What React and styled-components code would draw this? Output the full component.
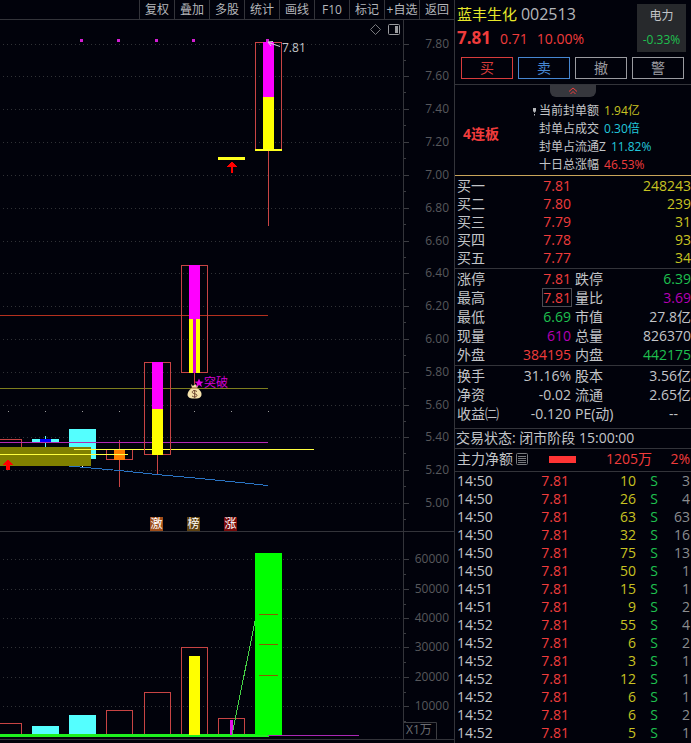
import React from 'react';
import styled, { createGlobalStyle } from 'styled-components';

const colors = {
  bg: '#01020b',
  line: '#33343a',
  text: '#c3c5c8',
  muted: '#8b8d90',
  red: '#f03c3c',
  green: '#1fc04f',
  yellow: '#c8c322',
  cyan: '#22c8dc',
  purple: '#b400b4',
  candle: '#c84444',
};

const GlobalStyle = createGlobalStyle`
  * {
    box-sizing: border-box;
  }

  body {
    margin: 0;
    background: ${colors.bg};
    color: ${colors.text};
    font-family: 'Open Sans', 'Noto Sans CJK SC', sans-serif;
    font-size: 14px;
  }

  button {
    font-family: inherit;
    cursor: pointer;
  }
`;

const Page = styled.div`
  display: flex;
  align-items: stretch;
  min-height: 100vh;
`;

const ChartColumn = styled.main`
  flex: 1;
  min-width: 0;
`;

const Toolbar = styled.nav`
  display: flex;
  justify-content: flex-end;
  height: 20px;
  border-bottom: 1px solid ${colors.line};
`;

const ToolButton = styled.button`
  width: 35px;
  padding: 0;
  border: 0;
  border-left: 1px solid ${colors.line};
  background: none;
  color: #b4b6ba;
  font-size: 12px;
  line-height: 17px;
  white-space: nowrap;
`;

const Pane = styled.section`
  display: flex;
  height: ${(props) => props.$height}px;
  border-bottom: 1px solid ${colors.line};
`;

const Plot = styled.svg`
  flex: 1;
  min-width: 0;
  height: 100%;
  font-size: 12px;
`;

const AxisColumn = styled.svg`
  width: 51px;
  height: 100%;
  border-left: 1px solid ${colors.line};
  font-size: 12px;
`;

const Side = styled.aside`
  width: 237px;
  border-left: 1px solid ${colors.line};
`;

const Header = styled.header`
  display: flex;
  justify-content: space-between;
  padding: 4px 5px 0 2px;
`;

const Name = styled.h1`
  margin: 0 0 4px;
  color: #e8e82a;
  font-size: 15px;
  font-weight: 400;
  line-height: 20px;
`;

const Code = styled.span`
  color: #b4b6ba;
  font-size: 16px;
`;

const PriceRow = styled.div`
  display: flex;
  gap: 9px;
  align-items: baseline;
  color: ${colors.red};
  line-height: 20px;
`;

const LastPrice = styled.strong`
  font-size: 17px;
`;

const Sector = styled.div`
  width: 49px;
  height: 48px;
  background: #27292c;
  font-size: 12px;
  line-height: 24px;
  text-align: center;
`;

const SectorChange = styled.div`
  color: ${colors.green};
`;

const Actions = styled.div`
  display: flex;
  gap: 5px;
  padding: 5px 7px 5px 6px;
  border-bottom: 1px solid ${colors.line};
`;

const ActionButton = styled.button`
  flex: 1;
  height: 22px;
  padding: 0;
  border: 1px solid ${(props) => props.$color};
  background: none;
  color: ${(props) => props.$color};
  font-size: 14px;
  line-height: 18px;
`;

const Collapse = styled.button`
  display: flex;
  justify-content: center;
  align-items: center;
  width: 46px;
  height: 12px;
  margin: 0 auto;
  padding: 0;
  border: 0;
  border-radius: 0 0 6px 6px;
  background: #36373d;
`;

const Seal = styled.section`
  display: flex;
  align-items: center;
  padding: 5px 0 1px 8px;
  border-bottom: 1px solid #c8a45a;
`;

const Streak = styled.strong`
  width: 69px;
  padding-bottom: 10px;
  color: ${colors.red};
`;

const SealList = styled.dl`
  margin: 0;
  font-size: 12px;
  line-height: 18px;
`;

const SealRow = styled.div`
  display: flex;
  gap: 5px;

  dt {
    display: flex;
    align-items: center;
  }

  dd {
    margin: 0;
    color: ${(props) => props.$color};
  }
`;

const IconSlot = styled.span`
  display: flex;
  width: 7px;
`;

const Block = styled.section`
  padding: ${(props) => props.$pad || '0'};
  border-bottom: 1px solid ${colors.line};
`;

const DataTable = styled.table`
  width: 100%;
  border-collapse: collapse;
  table-layout: fixed;
  line-height: ${(props) => props.$row}px;
  white-space: nowrap;

  th,
  td {
    height: ${(props) => props.$row}px;
    padding: 0;
    font-weight: 400;
    text-align: left;
  }

  th {
    padding-left: 2px;
  }
`;

const Num = styled.td`
  && {
    color: ${(props) => props.$color || colors.text};
    text-align: right;
    padding-right: ${(props) => props.$end || 0}px;
  }
`;

const Boxed = styled.span`
  display: inline-block;
  outline: 1px solid #4a4b52;
  line-height: 17px;
`;

const QuoteLabel = styled.span`
  padding-left: 2px;
`;

const Status = styled.p`
  margin: 0;
  padding-left: 1px;
  line-height: 18px;
  padding-bottom: 1px;
`;

const MainFlow = styled.div`
  display: flex;
  align-items: center;
  height: 22px;
  padding: 0 1px 2px 2px;
  line-height: 20px;
  color: ${colors.red};
`;

const FlowLabel = styled.span`
  display: flex;
  flex: none;
  align-items: center;
  gap: 3px;
  width: 92px;
  color: ${colors.text};
`;

const FlowBar = styled.span`
  width: 27px;
  height: 7px;
  background: #ff3434;
`;

const FlowValue = styled.span`
  flex: ${(props) => (props.$wide ? '1' : 'none')};
  width: 38px;
  text-align: right;
`;

const tools = ['复权', '叠加', '多股', '统计', '画线', 'F10', '标记', '+自选', '返回'];

const priceGrid = [44, 76, 109, 142, 175, 208, 241, 273, 306, 339, 372, 405, 437, 470, 503];
const priceLabels = priceGrid.map((y, i) => ({ y, label: (7.8 - i * 0.2).toFixed(2) }));
const volumeGrid = [559, 589, 618, 647, 677, 706];
const volumeLabels = volumeGrid.map((y, i) => ({ y, label: String(60000 - i * 10000) }));

const signalDots = [80, 117, 155, 192, 266];
const dayDots = [8, 45, 82, 119, 157, 194, 231, 268];

const badges = [
  { x: 150, label: '激', fill: '#a04e1a' },
  { x: 187, label: '榜', fill: '#5e4210' },
  { x: 224, label: '涨', fill: '#780a0a' },
];

const sealRows = [
  { label: '当前封单额', value: '1.94亿', color: colors.yellow, mark: true },
  { label: '封单占成交', value: '0.30倍', color: colors.cyan },
  { label: '封单占流通Z', value: '11.82%', color: colors.cyan },
  { label: '十日总涨幅', value: '46.53%', color: colors.red },
];

const bids = [
  ['买一', '7.81', '248243'],
  ['买二', '7.80', '239'],
  ['买三', '7.79', '31'],
  ['买四', '7.78', '93'],
  ['买五', '7.77', '34'],
];

const quotes = [
  { a: '涨停', av: '7.81', ac: colors.red, b: '跌停', bv: '6.39', bc: colors.green },
  { a: '最高', av: '7.81', ac: colors.red, boxed: true, b: '量比', bv: '3.69', bc: colors.purple },
  { a: '最低', av: '6.69', ac: colors.green, b: '市值', bv: '27.8亿' },
  { a: '现量', av: '610', ac: colors.purple, b: '总量', bv: '826370' },
  { a: '外盘', av: '384195', ac: colors.red, b: '内盘', bv: '442175', bc: colors.green },
];

const finance = [
  { a: '换手', av: '31.16%', b: '股本', bv: '3.56亿' },
  { a: '净资', av: '-0.02', b: '流通', bv: '2.65亿' },
  { a: '收益㈡', av: '-0.120', b: 'PE(动)', bv: '--', end: 13 },
];

const ticks = [
  ['14:50', 10, 3],
  ['14:50', 26, 4],
  ['14:50', 63, 63],
  ['14:50', 32, 16],
  ['14:50', 75, 13],
  ['14:50', 50, 1],
  ['14:51', 15, 1],
  ['14:51', 9, 2],
  ['14:52', 55, 4],
  ['14:52', 6, 2],
  ['14:52', 3, 1],
  ['14:52', 12, 1],
  ['14:52', 6, 1],
  ['14:52', 6, 2],
  ['14:52', 5, 1],
];

function GridLines({ rows }) {
  return rows.map((y) => (
    <line key={y} x1="3" x2="100%" y1={y + 0.5} y2={y + 0.5} stroke="#303236" strokeDasharray="1 3" />
  ));
}

// hollow body, x and y are the top left pixel of the outline
function Hollow({ x, y, height, width = 27 }) {
  return (
    <rect x={x + 0.5} y={y + 0.5} width={width - 1} height={height - 1} fill="none" stroke={colors.candle} />
  );
}

function Wick({ x, from, to, color = colors.candle }) {
  return <rect x={x} y={from} width="1" height={to - from} fill={color} />;
}

function Axis({ top, labels, minor, children }) {
  return (
    <AxisColumn>
      <g transform={`translate(0 ${-top})`}>
        {labels.map(({ y, label }) => (
          <g key={label}>
            <rect x="0" y={y} width="5" height="1" fill="#3c3d42" />
            <rect x="0" y={y + minor} width="2" height="1" fill="#3c3d42" />
            <text x="45" y={y + 4} textAnchor="end" fill="#57585c">{label}</text>
          </g>
        ))}
        {children}
      </g>
    </AxisColumn>
  );
}

function MoneyBag() {
  return (
    <g>
      <path d="M191 384 L193 386 L195 384 L197 386 L199 384 L197 388 L192 388 Z" fill="#f0dca0" />
      <path
        d="M192 388 H197 C200 390 202 392 201.500 395 C201 398 198 398.500 194.500 398.500 C191 398.500 188 398 187.500 395 C187.500 392 189 390 192 388 Z"
        fill="#f5e2ac"
      />
      <path d="M191.500 388 H198" stroke="#8c5a28" />
      <path d="M197 391.500 C194 389.500 191.500 391 192.500 392.800 C193.500 394.200 197 393.500 197 395.300 C197 397 194 397.500 192 396 M194.700 390 V398" fill="none" stroke="#6e4630" />
    </g>
  );
}

function PriceChart() {
  return (
    <Pane $height={512}>
      <Plot role="img" aria-label="日K线">
        <g transform="translate(0 -20)" shapeRendering="crispEdges">
          <GridLines rows={priceGrid} />

          <rect x="0" y="315" width="268" height="1" fill="#b4301e" />
          <rect x="0" y="388" width="268" height="1" fill="#7d7d1e" />
          {dayDots.map((x) => (
            <rect key={x} x={x} y="411" width="1" height="1" fill="#9a9a9a" />
          ))}
          {signalDots.map((x) => (
            <rect key={x} x={x} y="39" width="3" height="3" fill="#d21ed2" />
          ))}

          <Hollow x={-5} y={439} height={20} />
          <rect x="32" y="439" width="27" height="3" fill="#54ffff" />
          <Wick x={45} from={436} to={447} color="#54ffff" />
          <rect x="40" y="439" width="11" height="4" fill="#0000ff" />
          <rect x="69" y="429" width="27" height="30" fill="#54ffff" />
          <Wick x={119} from={440} to={487} />
          <Hollow x={106} y={449} height={11} />
          <rect x="114" y="450" width="11" height="10" fill="#ff8000" />

          <polyline
            points="69,466 80,467 119,470.500 157,474.500 200,478.500 240,482.500 268,485.500"
            fill="none"
            stroke="#2a74c4"
          />
          <rect x="0" y="447" width="91" height="19" fill="#808000" />
          <rect x="82" y="466" width="1" height="1" fill="#ffffff" />
          <rect x="0" y="442" width="268" height="1" fill="#b428b4" />
          <rect x="74" y="449" width="240" height="1" fill="#ffff40" />
          <rect x="0" y="454" width="128" height="1" fill="#ffff40" />
          <path d="M8 459 L13.500 465 H10 V470 H6 V465 H2.500 Z" fill="#ff0000" />

          <Hollow x={144} y={362} height={93} />
          <rect x="152" y="362" width="11" height="47" fill="#ff00ff" />
          <rect x="152" y="409" width="11" height="46" fill="#ffff00" />
          <Wick x={157} from={455} to={474} />

          <Hollow x={181} y={265} height={108} />
          <rect x="189" y="265" width="11" height="54" fill="#ff00ff" />
          <rect x="189" y="319" width="11" height="54" fill="#ffff00" />
          <rect x="193" y="319" width="3" height="54" fill="#d800d8" />
          <Wick x={194} from={373} to={384} />

          <rect x="218" y="157" width="27" height="3" fill="#ffff1e" />
          <path d="M232 161 L237 167 H233 V173 H231 V167 H227 Z" fill="#ff0000" />

          <Hollow x={255} y={42} height={109} />
          <rect x="263" y="42" width="11" height="55" fill="#ff00ff" />
          <rect x="263" y="97" width="11" height="53" fill="#ffff00" />
          <rect x="255" y="149" width="27" height="2" fill="#ffff1e" />
          <Wick x={268} from={151} to={226} />
        </g>

        <g transform="translate(0 -20)">
          <path d="M280 46.500 L268.500 42.500 M273 41.500 L268 42 L271 46" fill="none" stroke="#d8d8d8" />
          <text x="282" y="52" fill="#c3c5c8">7.81</text>
          <MoneyBag />
          <path
            d="M199 378.500 L200.300 381.500 L203.500 381.700 L201 383.700 L202 387 L199 385 L196 387 L197 383.700 L194.500 381.700 L197.700 381.500 Z"
            fill="#e000e0"
          />
          <text x="204" y="387" fill="#d200d2">突破</text>
          {badges.map(({ x, label, fill }) => (
            <g key={label}>
              <rect x={x} y="517" width="13" height="14" fill={fill} />
              <text x={x + 6.5} y="528" textAnchor="middle" fill="#ffffff">{label}</text>
            </g>
          ))}
          <path d="M375.500 24.500 L380.500 29.500 L375.500 34.500 L370.500 29.500 Z" fill="none" stroke="#77787c" />
          <rect x="388.500" y="24.500" width="11" height="10" rx="1" fill="none" stroke="#9a9b9f" />
          <rect x="395" y="26" width="3" height="7" fill="#9a9b9f" />
        </g>
      </Plot>
      <Axis top={20} labels={priceLabels} minor={16} />
    </Pane>
  );
}

function VolumeChart() {
  return (
    <Pane $height={208}>
      <Plot role="img" aria-label="成交量">
        <g transform="translate(0 -532)" shapeRendering="crispEdges">
          <GridLines rows={volumeGrid} />
          <Hollow x={-5} y={723} height={14} />
          <rect x="32" y="726" width="27" height="9" fill="#54ffff" />
          <rect x="69" y="715" width="27" height="20" fill="#54ffff" />
          <Hollow x={106} y={710} height={27} />
          <Hollow x={144} y={692} height={45} />
          <Hollow x={181} y={647} height={90} />
          <Hollow x={218} y={718} height={19} />
          <rect x="0" y="734" width="269" height="3" fill="#1ef01e" />
          <rect x="189" y="656" width="11" height="79" fill="#ffff00" />
          <rect x="230" y="720" width="3" height="15" fill="#e614e6" />
          <line x1="232" y1="735" x2="256" y2="616" stroke="#46d246" />
          <rect x="255" y="553" width="27" height="182" fill="#00ff00" />
          {[614, 644, 675].map((y) => (
            <rect key={y} x="259" y={y} width="19" height="1" fill="#8c5a00" />
          ))}
          <rect x="268" y="735" width="91" height="1" fill="#aa28b4" />
        </g>
      </Plot>
      <Axis top={532} labels={volumeLabels} minor={15}>
        <path d="M0 722.500 H32.500 V739" fill="none" stroke="#3c3d42" />
        <text x="2" y="734" fill="#6c6d72">X1万</text>
      </Axis>
    </Pane>
  );
}

function QuoteTable({ rows }) {
  return (
    <DataTable $row={19}>
      <colgroup>
        <col width="46" />
        <col width="70" />
        <col width="46" />
        <col />
      </colgroup>
      <tbody>
        {rows.map((row) => (
          <tr key={row.a}>
            <th scope="row">{row.a}</th>
            <Num $color={row.ac}>{row.boxed ? <Boxed>{row.av}</Boxed> : row.av}</Num>
            <th scope="row"><QuoteLabel>{row.b}</QuoteLabel></th>
            <Num $color={row.bc} $end={row.end}>{row.bv}</Num>
          </tr>
        ))}
      </tbody>
    </DataTable>
  );
}

function App() {
  return (
    <>
      <GlobalStyle />
      <Page>
        <ChartColumn>
          <Toolbar>
            {tools.map((tool) => (
              <ToolButton key={tool} type="button">{tool}</ToolButton>
            ))}
          </Toolbar>
          <PriceChart />
          <VolumeChart />
        </ChartColumn>

        <Side>
          <Header>
            <div>
              <Name>蓝丰生化 <Code>002513</Code></Name>
              <PriceRow>
                <LastPrice>7.81</LastPrice>
                <span>0.71</span>
                <span>10.00%</span>
              </PriceRow>
            </div>
            <Sector>
              <div>电力</div>
              <SectorChange>-0.33%</SectorChange>
            </Sector>
          </Header>

          <Actions>
            <ActionButton type="button" $color="#d83c3c">买</ActionButton>
            <ActionButton type="button" $color="#4687d2">卖</ActionButton>
            <ActionButton type="button" $color="#9a9ba0">撤</ActionButton>
            <ActionButton type="button" $color="#9a9ba0">警</ActionButton>
          </Actions>

          <Collapse type="button" aria-label="收起">
            <svg width="10" height="8" viewBox="0 0 10 8" fill="none" stroke="#f03c3c">
              <path d="M1 4.500 L5 1 L9 4.500 M2.500 7 L5 4.500 L7.500 7" />
            </svg>
          </Collapse>
          <Seal>
            <Streak>4连板</Streak>
            <SealList>
              {sealRows.map((row) => (
                <SealRow key={row.label} $color={row.color}>
                  <dt>
                    <IconSlot>
                      {row.mark && (
                        <svg width="5" height="9" viewBox="0 0 5 9" fill="#b4b6ba">
                          <path d="M1 1 H4 V4 L2.500 6 L1 4 Z M2 7 H3 V8.500 H2 Z" />
                        </svg>
                      )}
                    </IconSlot>
                    {row.label}
                  </dt>
                  <dd>{row.value}</dd>
                </SealRow>
              ))}
            </SealList>
          </Seal>

          <Block $pad="1px 0">
            <DataTable $row={18}>
              <colgroup>
                <col width="46" />
                <col width="70" />
                <col />
              </colgroup>
              <tbody>
                {bids.map(([label, price, volume]) => (
                  <tr key={label}>
                    <th scope="row">{label}</th>
                    <Num $color={colors.red}>{price}</Num>
                    <Num $color={colors.yellow}>{volume}</Num>
                  </tr>
                ))}
              </tbody>
            </DataTable>
          </Block>
          <Block $pad="0 0 1px">
            <QuoteTable rows={quotes} />
          </Block>
          <Block $pad="0 0 5px">
            <QuoteTable rows={finance} />
          </Block>
          <Block>
            <Status>交易状态: 闭市阶段 15:00:00</Status>
          </Block>
          <Block>
            <MainFlow>
              <FlowLabel>
                主力净额
                <svg width="12" height="12" viewBox="0 0 12 12" fill="none" stroke="#77797d">
                  <rect x="0.500" y="0.500" width="11" height="11" rx="1" />
                  <path d="M2 3.500 H10 M2 5.500 H10 M2 7.500 H10 M2 9.500 H10" />
                </svg>
              </FlowLabel>
              <FlowBar />
              <FlowValue $wide>1205万</FlowValue>
              <FlowValue>2%</FlowValue>
            </MainFlow>
          </Block>

          <DataTable $row={18}>
            <colgroup>
              <col width="46" />
              <col width="68" />
              <col width="67" />
              <col width="22" />
              <col />
            </colgroup>
            <tbody>
              {ticks.map(([time, volume, count], i) => (
                <tr key={i}>
                  <th scope="row">{time}</th>
                  <Num $color={colors.red}>7.81</Num>
                  <Num $color={colors.yellow}>{volume}</Num>
                  <Num $color={colors.green}>S</Num>
                  <Num $color={colors.muted} $end={1}>{count}</Num>
                </tr>
              ))}
            </tbody>
          </DataTable>
        </Side>
      </Page>
    </>
  );
}

export default App;
